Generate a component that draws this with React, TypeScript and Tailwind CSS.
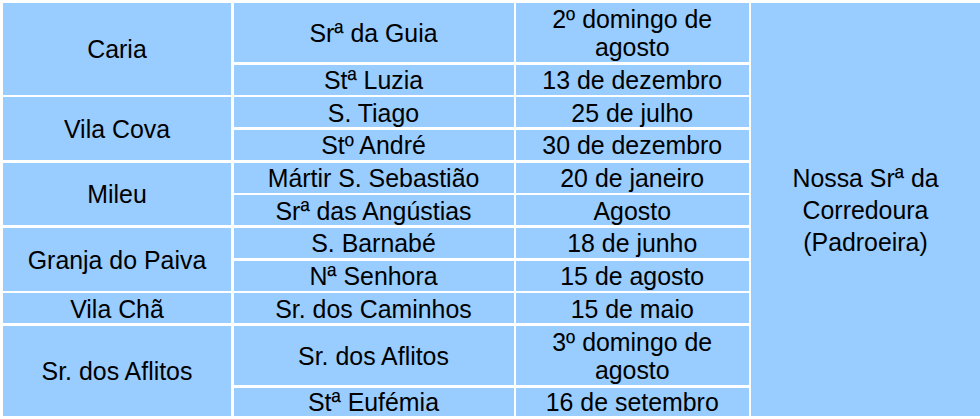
import React from "react";

const cell =
  "bg-[#99ccff] flex items-center justify-center text-center text-black leading-[28.5px] pt-[1.5px]";

export default function App() {
  return (
    <div
      className="w-[980px] h-[419px] bg-white pl-[3px] pt-[3px] overflow-hidden"
      style={{ fontFamily: '"Liberation Sans", Arial, sans-serif' }}
    >
      <div className="grid grid-cols-[228px_280px_232.5px_1fr] grid-rows-[59px_repeat(8,30px)_59px_28px] gap-x-[2.5px] gap-y-[2.67px] text-[24.9px]">
        {/* Column 1 */}
        <div className={`${cell} col-start-1 row-start-1 row-span-2`}>Caria</div>
        <div className={`${cell} col-start-1 row-start-3 row-span-2`}>Vila Cova</div>
        <div className={`${cell} col-start-1 row-start-5 row-span-2`}>Mileu</div>
        <div className={`${cell} col-start-1 row-start-7 row-span-2`}>Granja do Paiva</div>
        <div className={`${cell} col-start-1 row-start-9`}>Vila Chã</div>
        <div className={`${cell} col-start-1 row-start-10 row-span-2`}>Sr. dos Aflitos</div>

        {/* Column 2 */}
        <div className={`${cell} col-start-2 row-start-1`}>Srª da Guia</div>
        <div className={`${cell} col-start-2 row-start-2`}>Stª Luzia</div>
        <div className={`${cell} col-start-2 row-start-3`}>S. Tiago</div>
        <div className={`${cell} col-start-2 row-start-4`}>Stº André</div>
        <div className={`${cell} col-start-2 row-start-5`}>Mártir S. Sebastião</div>
        <div className={`${cell} col-start-2 row-start-6`}>Srª das Angústias</div>
        <div className={`${cell} col-start-2 row-start-7`}>S. Barnabé</div>
        <div className={`${cell} col-start-2 row-start-8`}>Nª Senhora</div>
        <div className={`${cell} col-start-2 row-start-9`}>Sr. dos Caminhos</div>
        <div className={`${cell} col-start-2 row-start-10`}>Sr. dos Aflitos</div>
        <div className={`${cell} col-start-2 row-start-11`}>Stª Eufémia</div>

        {/* Column 3 */}
        <div className={`${cell} col-start-3 row-start-1`}>
          <span>
            2º domingo de
            <br />
            agosto
          </span>
        </div>
        <div className={`${cell} col-start-3 row-start-2`}>13 de dezembro</div>
        <div className={`${cell} col-start-3 row-start-3`}>25 de julho</div>
        <div className={`${cell} col-start-3 row-start-4`}>30 de dezembro</div>
        <div className={`${cell} col-start-3 row-start-5`}>20 de janeiro</div>
        <div className={`${cell} col-start-3 row-start-6`}>Agosto</div>
        <div className={`${cell} col-start-3 row-start-7`}>18 de junho</div>
        <div className={`${cell} col-start-3 row-start-8`}>15 de agosto</div>
        <div className={`${cell} col-start-3 row-start-9`}>15 de maio</div>
        <div className={`${cell} col-start-3 row-start-10`}>
          <span>
            3º domingo de
            <br />
            agosto
          </span>
        </div>
        <div className={`${cell} col-start-3 row-start-11`}>16 de setembro</div>

        {/* Column 4 */}
        <div className={`${cell} col-start-4 row-start-1 row-span-11 leading-[32px]`}>
          <span>
            Nossa Srª da
            <br />
            Corredoura
            <br />
            (Padroeira)
          </span>
        </div>
      </div>
    </div>
  );
}
